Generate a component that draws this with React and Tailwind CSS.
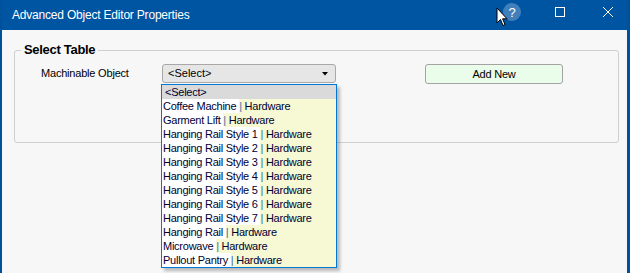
import React from 'react';

const items = [
  ['Coffee Machine', 'Hardware'],
  ['Garment Lift', 'Hardware'],
  ['Hanging Rail Style 1', 'Hardware'],
  ['Hanging Rail Style 2', 'Hardware'],
  ['Hanging Rail Style 3', 'Hardware'],
  ['Hanging Rail Style 4', 'Hardware'],
  ['Hanging Rail Style 5', 'Hardware'],
  ['Hanging Rail Style 6', 'Hardware'],
  ['Hanging Rail Style 7', 'Hardware'],
  ['Hanging Rail', 'Hardware'],
  ['Microwave', 'Hardware'],
  ['Pullout Pantry', 'Hardware'],
];

function TitleBar() {
  return (
    <div className="relative h-[30px] bg-[#0055a3] flex items-center shrink-0">
      <span className="ml-[10px] text-[12px] tracking-[-0.2px] text-white">
        Advanced Object Editor Properties
      </span>

      {/* help button + mouse cursor */}
      <div className="absolute left-[501px] top-[3px] w-[18px] h-[18px] rounded-full bg-white/25 flex items-center justify-center text-white text-[13px] leading-none">
        ?
      </div>
      <svg className="absolute left-[494px] top-[7px]" width="12" height="20" viewBox="0 0 12 20">
        <path d="M1 1 L1 16 L4.5 12.5 L7 18.5 L9 17.5 L6.6 11.8 L11 11.8 Z" fill="#ffffff" stroke="#000000" strokeWidth="1" />
      </svg>

      {/* maximize */}
      <div className="absolute left-[553px] top-[7px] w-[10px] h-[10px] border border-white" />
      {/* close */}
      <svg className="absolute left-[600px] top-[6px]" width="12" height="12" viewBox="0 0 12 12">
        <path d="M1 1 L11 11 M11 1 L1 11" stroke="#ffffff" strokeWidth="1" />
      </svg>
    </div>
  );
}

function DropdownList() {
  return (
    <div className="absolute left-[159px] top-[54px] w-[176px] border border-[#0078d7] bg-[#f6f9d4] shadow-[3px_3px_3px_rgba(0,0,0,0.25)] text-[11px] tracking-[-0.25px] text-[#000033]">
      <div className="h-[14px] leading-[14px] bg-[#dadada] pl-[3px]">&lt;Select&gt;</div>
      {items.map(([name, type]) => (
        <div key={name} className="h-[14px] leading-[14px] flex whitespace-pre">
          <span className="bg-white pl-[1px]">{name} </span>
          <span className="text-[#3a6ea5]">|</span>
          <span> {type}</span>
        </div>
      ))}
    </div>
  );
}

export default function App() {
  return (
    <div className="w-[630px] h-[273px] overflow-hidden bg-[#f7f7f7] border-l-2 border-r-[3px] border-[#00509c] flex flex-col font-['Liberation_Sans',Arial,sans-serif]">
      <TitleBar />

      <div className="relative flex-1">
        {/* group box */}
        <div className="relative mt-[20px] ml-[12px] w-[605px] h-[93px] border border-[#cfcfcf] rounded-[3px]">
          <span className="absolute left-[6px] top-[-8px] px-[3px] bg-[#f7f7f7] text-[13px] font-bold tracking-[-0.3px] leading-[14px] text-black">
            Select Table
          </span>

          <div className="flex items-start pt-[13px]">
            <span className="ml-[26px] w-[121px] text-[11px] tracking-[-0.2px] leading-[14px] text-black mt-[2px]">
              Machinable Object
            </span>
            <div className="w-[174px] h-[19px] border border-[#a8a8a8] rounded-[3px] bg-[#e6e6e6] flex items-center justify-between pl-[5px] pr-[7px] text-[11px] text-black">
              <span>&lt;Select&gt;</span>
              <svg width="6" height="4" viewBox="0 0 6 4">
                <path d="M0 0 L6 0 L3 3.5 Z" fill="#000000" />
              </svg>
            </div>
            <button className="ml-[89px] w-[138px] h-[20px] border border-[#a3a3a3] rounded-[3px] bg-[#eafcea] text-[11px] tracking-[-0.2px] text-black flex items-center justify-center">
              Add New
            </button>
          </div>
        </div>

        <DropdownList />
      </div>
    </div>
  );
}
